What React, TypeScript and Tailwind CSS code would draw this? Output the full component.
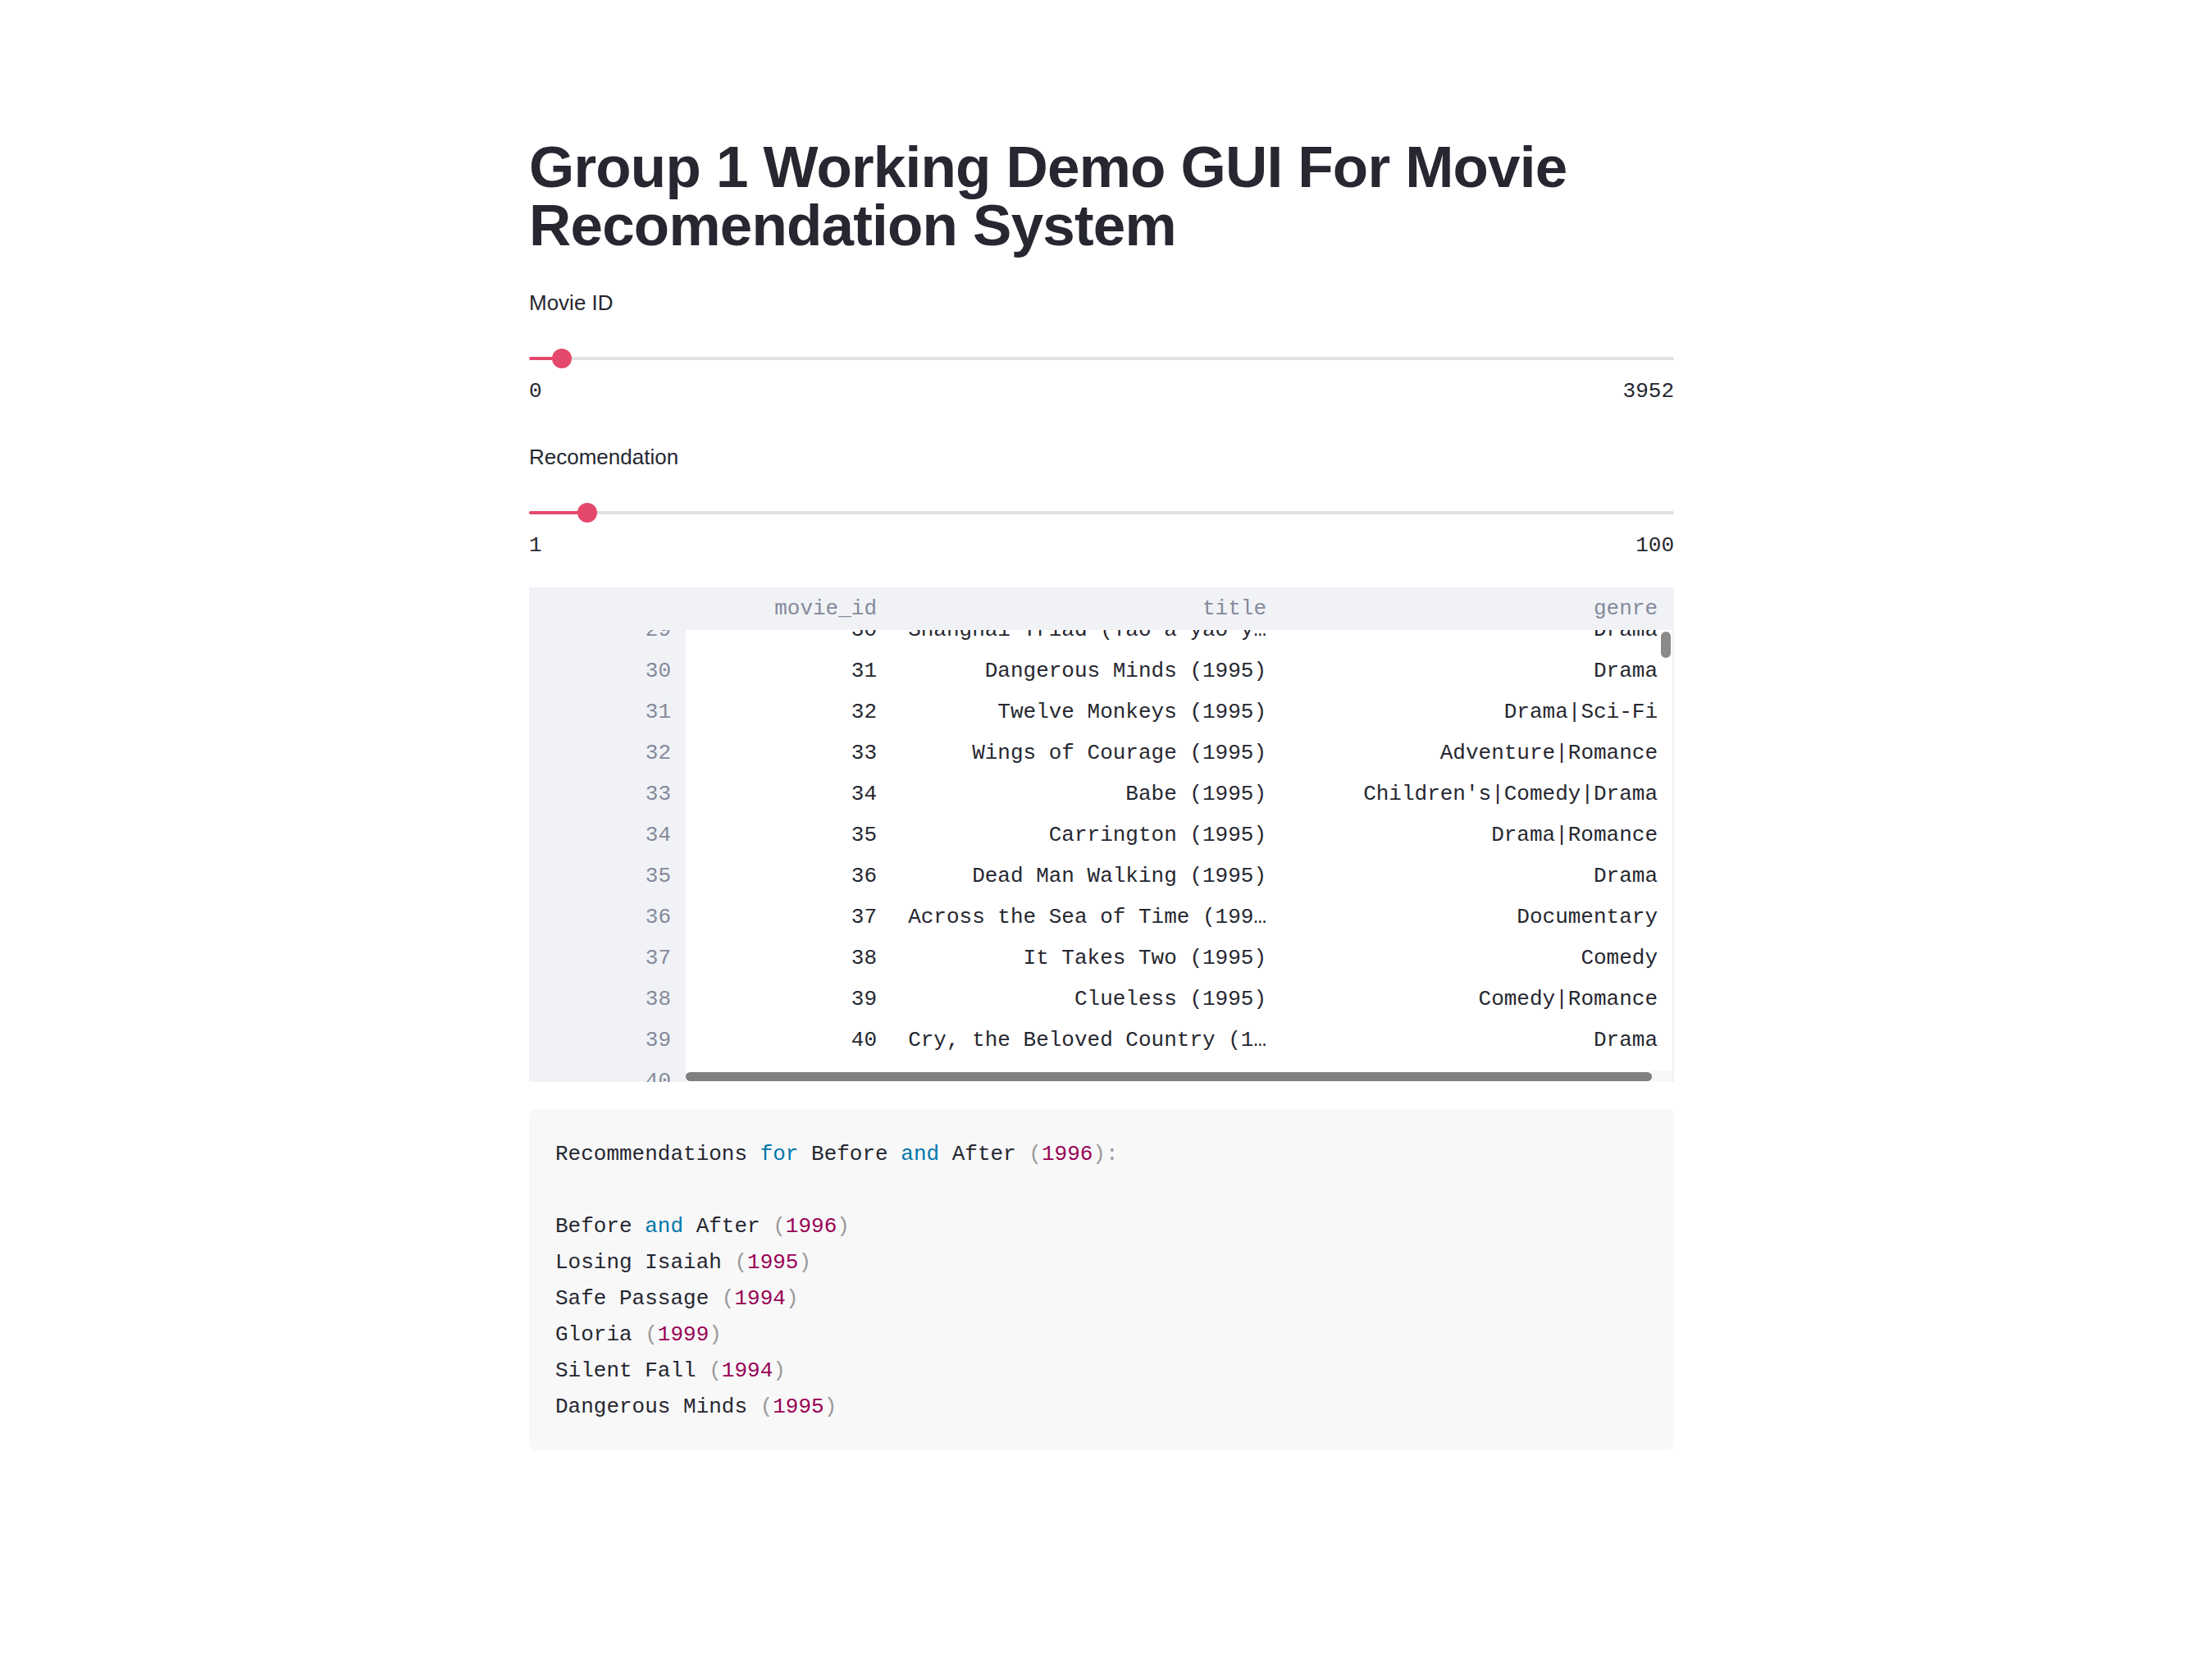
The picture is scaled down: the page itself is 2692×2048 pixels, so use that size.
import React from "react";

type Row = [string, string, string, string];

const rows: Row[] = [
  ["29", "30", "Shanghai Triad (Yao a yao y…", "Drama"],
  ["30", "31", "Dangerous Minds (1995)", "Drama"],
  ["31", "32", "Twelve Monkeys (1995)", "Drama|Sci-Fi"],
  ["32", "33", "Wings of Courage (1995)", "Adventure|Romance"],
  ["33", "34", "Babe (1995)", "Children's|Comedy|Drama"],
  ["34", "35", "Carrington (1995)", "Drama|Romance"],
  ["35", "36", "Dead Man Walking (1995)", "Drama"],
  ["36", "37", "Across the Sea of Time (199…", "Documentary"],
  ["37", "38", "It Takes Two (1995)", "Comedy"],
  ["38", "39", "Clueless (1995)", "Comedy|Romance"],
  ["39", "40", "Cry, the Beloved Country (1…", "Drama"],
  ["40", "41", "Richard III (1995)", "Drama|War"],
];

const recs: [string, string][] = [
  ["Before and After", "1996"],
  ["Losing Isaiah", "1995"],
  ["Safe Passage", "1994"],
  ["Gloria", "1999"],
  ["Silent Fall", "1994"],
  ["Dangerous Minds", "1995"],
];

const mono = "font-['Liberation_Mono',monospace]";

const Kw = ({ children }: { children: React.ReactNode }) => (
  <span className="text-[#0077aa]">{children}</span>
);
const Num = ({ children }: { children: React.ReactNode }) => (
  <span className="text-[#990055]">{children}</span>
);
const Punc = ({ children }: { children: React.ReactNode }) => (
  <span className="text-[#999999]">{children}</span>
);

// highlight "and"/"for" like prism does in python blocks
const Words = ({ text }: { text: string }) => (
  <>
    {text.split(/(\band\b|\bfor\b)/).map((part, i) =>
      part === "and" || part === "for" ? <Kw key={i}>{part}</Kw> : <span key={i}>{part}</span>
    )}
  </>
);

interface SliderProps {
  label: string;
  min: string;
  max: string;
  fill: number;
  top: string;
}

const Slider = ({ label, min, max, fill, top }: SliderProps) => (
  <div className={top}>
    <div className="text-[26px] leading-[36px] text-[#262730]">{label}</div>
    <div className="mt-[38px] flex h-[24px] items-center">
      <div className="h-[4px] rounded-l-full bg-[#e4486b]" style={{ width: fill }} />
      <div className="h-[24px] w-[24px] shrink-0 rounded-full bg-[#e4486b]" />
      <div className="h-[4px] flex-1 rounded-r-full bg-[#e1e1e1]" />
    </div>
    <div className={`mt-[10px] flex justify-between ${mono} text-[26px] leading-[36px] text-[#262730]`}>
      <span>{min}</span>
      <span>{max}</span>
    </div>
  </div>
);

const cols = "grid grid-cols-[191px_251px_475px_1fr]";

export default function App() {
  return (
    <div className="min-h-[2048px] w-full bg-white pr-[6px] font-['Liberation_Sans',Arial,sans-serif]">
      <div className="mx-auto w-[1396px] pt-[168px]">
        <h1 className="text-[71px] font-bold leading-[71px] tracking-[-0.8px] text-[#262730]">
          Group 1 Working Demo GUI For Movie Recomendation System
        </h1>

        <Slider label="Movie ID" min="0" max="3952" fill={28} top="mt-[41px]" />
        <Slider label="Recomendation" min="1" max="100" fill={59} top="mt-[44px]" />

        {/* dataframe */}
        <div className={`relative mt-[33px] h-[603px] overflow-hidden border-r-2 border-[#f0f2f6] ${mono} text-[26px]`}>
          <div className={`${cols} h-[52px] bg-[#f0f2f6] leading-[52px] text-[#858a9b]`}>
            <div />
            <div className="pr-[18px] text-right">movie_id</div>
            <div className="pr-[18px] text-right">title</div>
            <div className="pr-[18px] text-right">genre</div>
          </div>
          <div className="h-[551px] overflow-hidden">
            <div className="-mt-[25px]">
              {rows.map((r) => (
                <div key={r[0]} className={`${cols} h-[50px] whitespace-nowrap leading-[50px]`}>
                  <div className="bg-[#f0f2f6] pr-[18px] text-right text-[#858a9b]">{r[0]}</div>
                  <div className="pr-[18px] text-right text-[#262730]">{r[1]}</div>
                  <div className="overflow-hidden pr-[18px] text-right text-[#262730]">{r[2]}</div>
                  <div className="pr-[18px] text-right text-[#262730]">{r[3]}</div>
                </div>
              ))}
            </div>
          </div>
          {/* scrollbars */}
          <div className="absolute right-[2px] top-[54px] h-[32px] w-[12px] rounded-full bg-[#8a8a8a]" />
          <div className="absolute bottom-0 left-[191px] right-0 h-[15px] bg-white" />
          <div className="absolute bottom-0 right-0 h-[14px] w-[26px] bg-[#f7f7f8]" />
          <div className="absolute bottom-[1px] left-[191px] h-[11px] w-[1178px] rounded-full bg-[#808080]" />
        </div>

        {/* code output */}
        <div className={`mt-[33px] rounded-[8px] bg-[#f8f8f9] px-[32px] pb-[31px] pt-[33px] ${mono} whitespace-pre text-[26px] leading-[44px] text-[#262730]`}>
          <div>
            <Words text="Recommendations for Before and After " />
            <Punc>(</Punc>
            <Num>1996</Num>
            <Punc>)</Punc>
            <Punc>:</Punc>
          </div>
          <div> </div>
          {recs.map(([name, year]) => (
            <div key={name}>
              <Words text={name + " "} />
              <Punc>(</Punc>
              <Num>{year}</Num>
              <Punc>)</Punc>
            </div>
          ))}
        </div>
      </div>
    </div>
  );
}
